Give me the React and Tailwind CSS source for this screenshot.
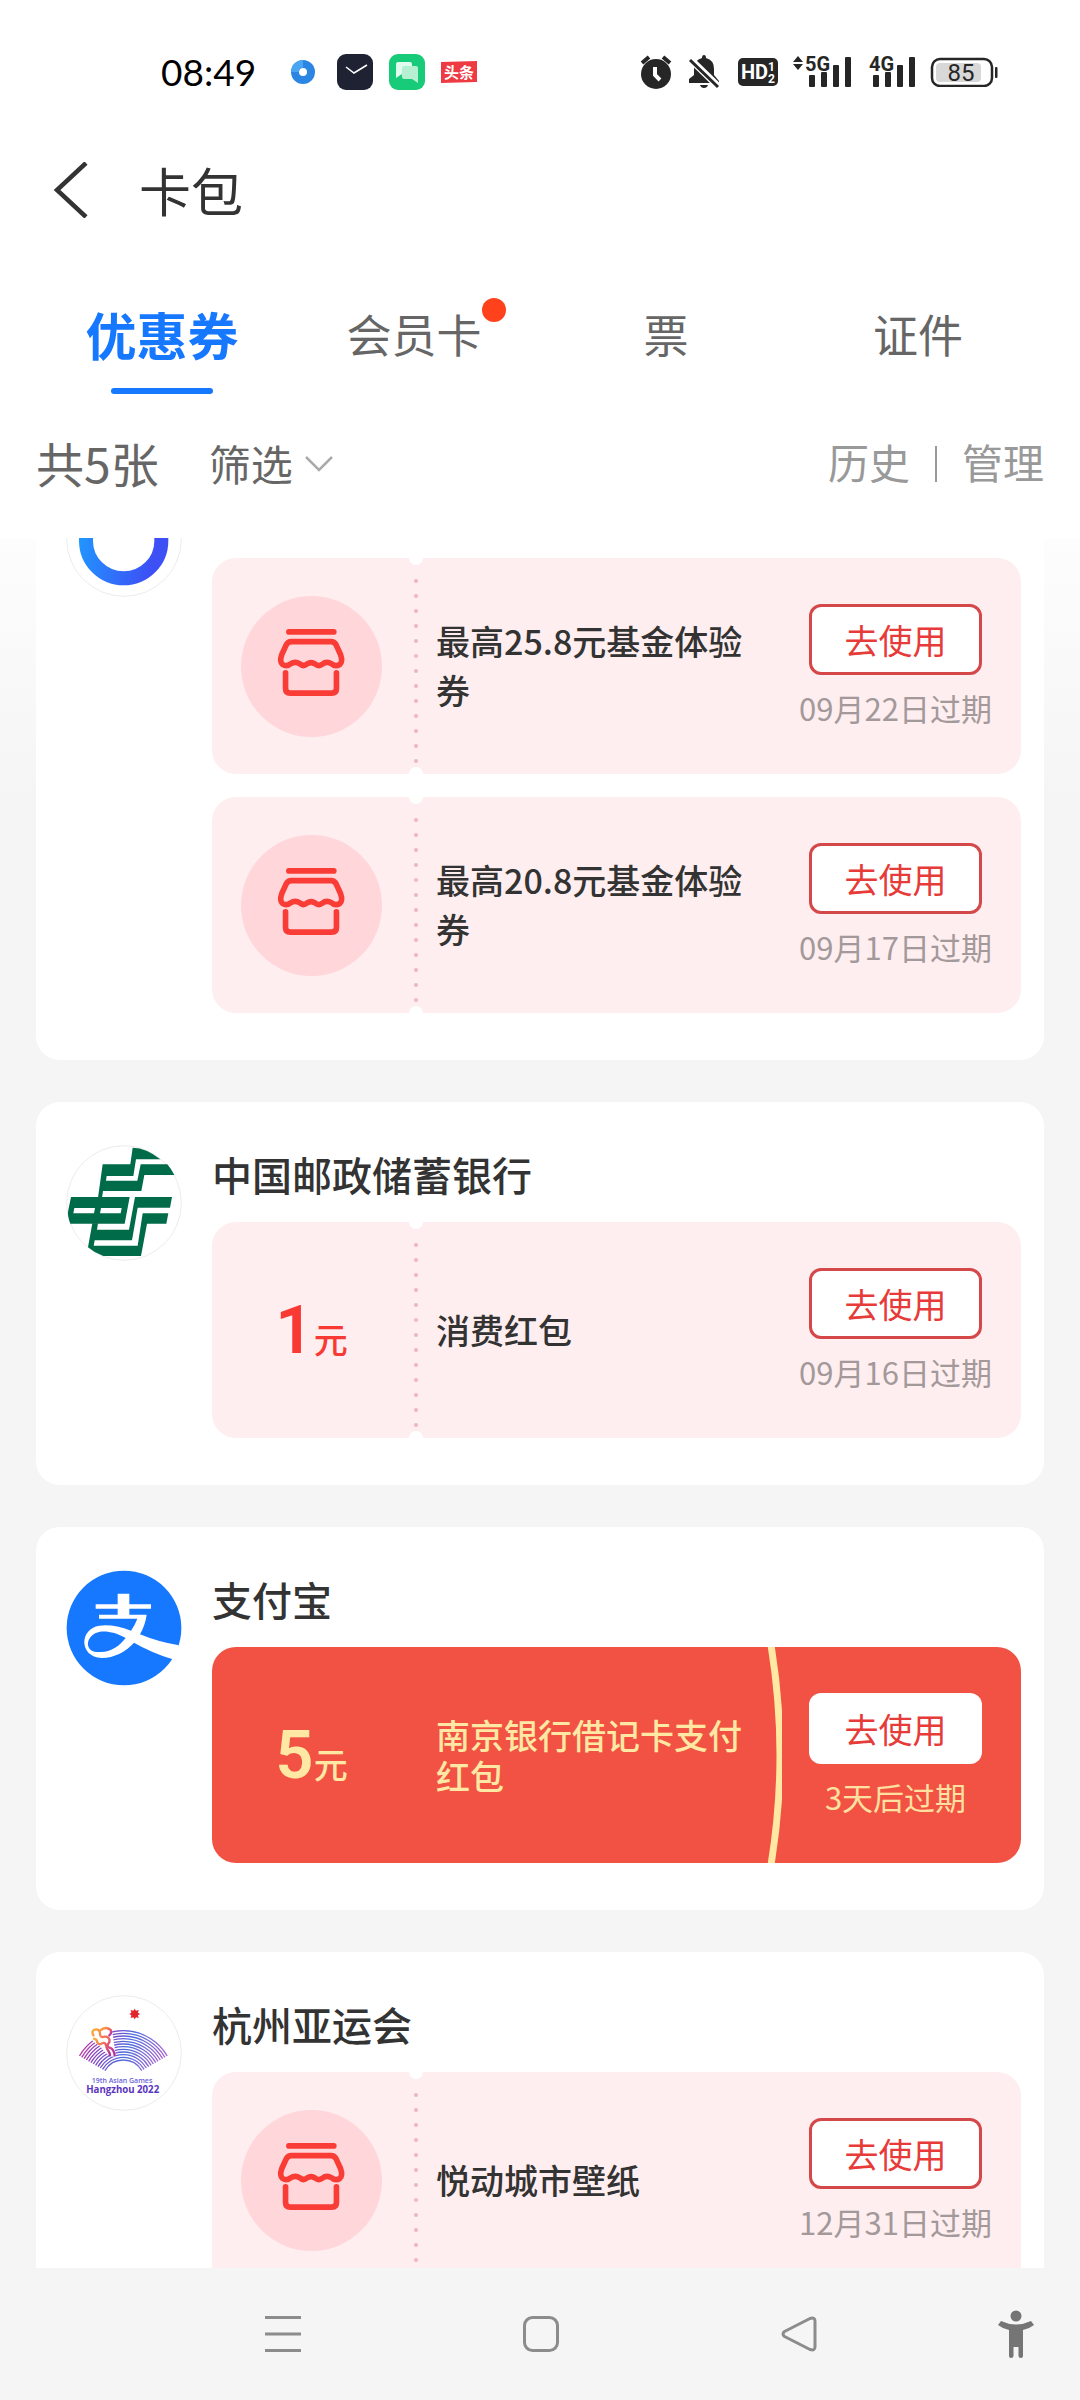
import React, { useState } from "react";

const tabs = [
  { id: "coupon", label: "优惠券" },
  { id: "member", label: "会员卡", dot: true },
  { id: "ticket", label: "票" },
  { id: "license", label: "证件" },
];

const merchants = [
  {
    logo: "ring",
    coupons: [
      { title: "最高25.8元基金体验券", expire: "09月22日过期" },
      { title: "最高20.8元基金体验券", expire: "09月17日过期" },
    ],
  },
  {
    name: "中国邮政储蓄银行",
    logo: "post",
    coupons: [{ title: "消费红包", amount: 1, expire: "09月16日过期" }],
  },
  {
    name: "支付宝",
    logo: "alipay",
    coupons: [
      {
        title: "南京银行借记卡支付红包",
        amount: 5,
        expire: "3天后过期",
        red: true,
      },
    ],
  },
  {
    name: "杭州亚运会",
    logo: "games",
    coupons: [{ title: "悦动城市壁纸", expire: "12月31日过期" }],
  },
];

const RingLogo = () => (
  <svg viewBox="108 -117 348 348" className="w-full">
    <defs>
      <linearGradient id="ring" x1="0" y1="0" x2="1" y2="0.2">
        <stop offset="0" stopColor="#2196ff" />
        <stop offset="1" stopColor="#3d50f5" />
      </linearGradient>
    </defs>
    <circle cx="282" cy="57" r="172" fill="#fff" stroke="#ececec" strokeWidth="3" />
    <circle cx="281" cy="62" r="113" fill="none" stroke="url(#ring)" strokeWidth="42" />
  </svg>
);

const PostLogo = () => (
  <svg viewBox="108 165 348 348" className="w-full">
    <circle cx="282" cy="339" r="172" fill="#fff" stroke="#ececec" strokeWidth="3" />
    <g fill="#006b48">
      <path d="M218 223H301L308 173Q350 174 391 208H318L310 258H230L228 272H322L332 223H412Q424 237 433 255H343L334 303H219L216 323H204Z" />
      <path
        fillRule="evenodd"
        d="M123 321H299L284 401H121Q111 375 115 360ZM133 354L130 370H192L195 354ZM213 354L210 370H272L275 354Z"
      />
      <path d="M187 400H204L201 419H297L315 321H426L420 353H323L306 451H194L191 467H323L338 370H415L409 401H351L333 498H220Q194 489 174 472Z" />
    </g>
  </svg>
);

const AlipayLogo = () => (
  <svg viewBox="108 90 348 348" className="w-full">
    <circle cx="282" cy="264" r="172" fill="#1677ff" />
    <path
      d="M197 193H263V161H298V193H363V206H298V224H350Q346 254 330 283Q385 306 447 316Q443 340 428 358Q360 336 312 308Q272 352 215 354C146 350 148 266 208 257Q250 252 303 272Q315 255 322 236H207V224H263V206H197Z"
      fill="#fff"
    />
    <path
      d="M287 294C255 275 220 270 200 278C166 290 162 338 208 336C245 338 270 315 287 294Z"
      fill="#1677ff"
    />
  </svg>
);

const GamesLogo = () => {
  const radii = [64, 72, 80, 88, 96, 104, 112, 120, 128, 136, 144, 152];
  return (
    <svg viewBox="108 43 348 348" className="w-full">
      <defs>
        <linearGradient id="fan" gradientUnits="userSpaceOnUse" x1="150" y1="150" x2="400" y2="270">
          <stop offset="0" stopColor="#e8338a" />
          <stop offset="0.25" stopColor="#8a3fc4" />
          <stop offset="0.55" stopColor="#4f6edc" />
          <stop offset="1" stopColor="#b45fd0" />
        </linearGradient>
        <linearGradient id="wave" x1="0" y1="0" x2="1" y2="1">
          <stop offset="0" stopColor="#fbb03b" />
          <stop offset="0.5" stopColor="#f2665e" />
          <stop offset="1" stopColor="#b02aa8" />
        </linearGradient>
      </defs>
      <circle cx="282" cy="217" r="172" fill="#fff" stroke="#ececec" strokeWidth="3" />
      <path d="M314 84l4 6 8-2-2 8 6 4-6 4 2 8-8-2-4 6-4-6-8 2 2-8-6-4 6-4-2-8 8 2z" fill="#e0262c" />
      <g fill="none" stroke="url(#fan)" strokeWidth="4">
        {radii.map((r) => (
          <path
            key={r}
            d={`M${280 - r * 0.866} ${302 - r * 0.5}A${r} ${r} 0 0 1 ${280 + r * 0.866} ${302 - r * 0.5}`}
          />
        ))}
      </g>
      <path d="M184 150Q214 128 246 148L258 228Q232 230 212 198L188 182Z" fill="#fff" />
      <g fill="none" stroke="url(#wave)" strokeWidth="7" strokeLinecap="round">
        <path d="M190 164q-8-16 8-18q12 0 12 14q0 12 14 8q10-2 14 8q2 10-4 14q-4 10 8 12q10 6 12 22" />
        <path d="M212 148q16-12 30 0q4 10-4 16" />
        <path d="M192 174q10 2 10 12q6 8 14 2q10-4 12 6q2 12 8 18q4 6 4 12" />
      </g>
      <text x="276" y="308" textAnchor="middle" fontSize="21" fill="#6a62d8" className="font-['Open_Sans',sans-serif] font-semibold">
        19th Asian Games
      </text>
      <text x="278" y="338" textAnchor="middle" fontSize="29" fill="#5a35c0" className="font-['Open_Sans',sans-serif] font-bold">
        Hangzhou 2022
      </text>
    </svg>
  );
};

const logos = {
  ring: RingLogo,
  post: PostLogo,
  alipay: AlipayLogo,
  games: GamesLogo,
};

const StoreIcon = () => (
  <svg viewBox="633 227 424 424" className="w-[141px] h-[141px]">
    <circle cx="845" cy="439" r="212" fill="#ffd6da" />
    <g fill="none" stroke="#fa3c36" strokeWidth="17" strokeLinecap="round" strokeLinejoin="round">
      <path d="M777 335H912" />
      <path d="M784 364H904Q914 364 919 374L932 402Q940 424 930 433Q917 441 906 431Q890 422 878 432Q867 441 855 431Q844 423 832 431Q820 441 810 431Q796 422 782 431Q770 441 758 433Q748 424 756 402L769 374Q774 364 784 364Z" />
      <path d="M767 458V505Q767 519 781 519H906Q920 519 920 505V458" />
    </g>
  </svg>
);

const Signal = ({ label, arrows }) => (
  <svg viewBox="0 -8 60 52" className="w-[60px] h-[52px]" fill="#262626">
    {arrows && <path d="M6 2L11 8H1ZM6 16L11 10H1Z" />}
    <text x="13" y="17" fontSize="20" className="font-['Roboto',sans-serif] font-bold">
      {label}
    </text>
    <rect x="17" y="21" width="6" height="12" rx="1" />
    <rect x="29" y="18" width="6" height="15" rx="1" />
    <rect x="41" y="11" width="6" height="22" rx="1" />
    <rect x="53" y="3" width="6" height="30" rx="1" />
  </svg>
);

const StatusBar = () => (
  <div className="h-36 pl-[161px] pr-[82px] flex items-center justify-between">
    <div className="flex items-center">
      <span className="w-[124px] text-[37px] leading-[44px] text-black font-['Lato',sans-serif]">08:49</span>
      <div className="flex items-center gap-4">
        <svg viewBox="0 0 36 36" className="w-9 h-9">
          <circle cx="18" cy="18" r="8" fill="none" stroke="#2a86e2" strokeWidth="8" />
          <path d="M10 18a8 8 0 0 1 8-8" fill="none" stroke="#4aa5f2" strokeWidth="8" />
        </svg>
        <svg viewBox="0 0 36 36" className="w-9 h-9">
          <rect width="36" height="36" rx="9" fill="#1f2233" />
          <path d="M9 13L17 19L30 11" fill="none" stroke="#fff" strokeWidth="1.5" />
        </svg>
        <svg viewBox="0 0 36 36" className="w-9 h-9">
          <rect width="36" height="36" rx="9" fill="#17cb78" />
          <path d="M9 8H21Q23 8 23 10V18Q23 20 21 20H13L7 24V10Q7 8 9 8Z" fill="#e2fbef" />
          <path d="M15 12H27Q29 12 29 14V29L23 25H15Q13 25 13 23V14Q13 12 15 12Z" fill="#b5f0d3" />
        </svg>
        <svg viewBox="0 0 36 36" className="w-9 h-9">
          <path d="M0 8L36 7V28L0 29Z" fill="#ee3b43" />
          <text x="18" y="24" textAnchor="middle" fontSize="15" fill="#fff" className="font-bold">
            头条
          </text>
        </svg>
      </div>
    </div>
    <div className="flex items-center">
      <svg viewBox="0 0 32 36" className="w-8 h-9" fill="#262626">
        <circle cx="16" cy="20" r="15" />
        <path d="M2 9L9 3M30 9L23 3" stroke="#262626" strokeWidth="4" />
        <path d="M15 13V21L20 26" fill="none" stroke="#fff" strokeWidth="4" />
      </svg>
      <svg viewBox="0 0 32 36" className="ml-4 w-8 h-9">
        <path d="M16 1Q18 1 18 4Q26 6 26 15V21L31 27V29H1V25L6 21V15Q6 6 14 4Q14 1 16 1ZM12 31H20Q19 34 16 34Q13 34 12 31Z" fill="#262626" />
        <path d="M0 3L32 34" stroke="#fff" strokeWidth="7" />
        <path d="M2 6L30 33" stroke="#262626" strokeWidth="3" />
      </svg>
      <svg viewBox="0 0 40 28" className="ml-[18px] w-10 h-7">
        <rect width="40" height="28" rx="5" fill="#262626" />
        <g fill="#fff" className="font-['Roboto',sans-serif] font-bold">
          <text x="3" y="21" fontSize="20">HD</text>
          <text x="30" y="13" fontSize="12">1</text>
          <text x="30" y="25" fontSize="12">2</text>
        </g>
      </svg>
      <span className="ml-3.5 flex gap-1">
        <Signal label="5G" arrows />
        <Signal label="4G" />
      </span>
      <svg viewBox="0 0 68 30" className="ml-3.5 w-[68px] h-[30px]">
        <rect x="2" y="2" width="60" height="27" rx="8" fill="#fff" stroke="#262626" strokeWidth="2.5" />
        <rect x="6" y="6" width="45" height="19" rx="4" fill="#d8d8d8" />
        <rect x="65" y="10" width="2.5" height="11" rx="1" fill="#262626" />
        <text x="31" y="24" textAnchor="middle" fontSize="24" fill="#262626" className="font-['Roboto',sans-serif]">
          85
        </text>
      </svg>
    </div>
  </div>
);

const Coupon = ({ title, amount, expire, red }) => (
  <div
    className={`relative flex items-center h-[216px] rounded-3xl overflow-hidden ${red ? "bg-[#f15244]" : "bg-[#feeeef]"}`}
  >
    <div
      className={`w-[199px] shrink-0 flex items-baseline justify-center ${red ? "text-[#ffe8a3]" : "text-[#f93a34]"}`}
    >
      {amount ? (
        <>
          <span className="text-[67px] leading-[80px] font-semibold font-['Roboto',sans-serif]">{amount}</span>
          <span className="text-[34px] font-medium">元</span>
        </>
      ) : (
        <StoreIcon />
      )}
    </div>
    <p
      className={`flex-1 pl-[25px] text-[34px] ${red ? "leading-[41px] font-medium text-[#ffe8a3]" : "pb-0.5 leading-[49px] font-medium text-[#333]"}`}
    >
      {title}
    </p>
    <div className="w-[251px] shrink-0 flex flex-col items-center gap-3">
      <button
        type="button"
        className={`w-[173px] h-[71px] rounded-xl bg-white text-[34px] text-[#e63b38] ${red ? "" : "border-3 border-[#d4484a]"}`}
      >
        去使用
      </button>
      <span className={`text-[31px] leading-[42px] ${red ? "text-[#ffe0a0]" : "text-[#a3999a]"}`}>{expire}</span>
    </div>

    {red ? (
      <svg viewBox="0 0 20 216" className="absolute right-[239px] top-0 w-5 h-full">
        <path d="M9 -2Q27 108 9 218" fill="none" stroke="#ffe8a3" strokeWidth="7" />
      </svg>
    ) : (
      <svg viewBox="0 0 16 216" className="absolute left-[196px] top-0 w-4 h-full">
        <path d="M8 23V204" stroke="#efb6bd" strokeWidth="4" strokeLinecap="round" strokeDasharray="0 15" />
        <circle cx="8" cy="0" r="7" fill="#fff" />
        <circle cx="8" cy="216" r="7" fill="#fff" />
      </svg>
    )}
  </div>
);

const MerchantCard = ({ name, logo, coupons }) => {
  const Logo = logos[logo];
  return (
    <section className="flex items-start gap-[30px] pl-[30px] pr-[23px] pt-[43px] pb-[47px] bg-white rounded-3xl">
      <div className="w-[116px] shrink-0">
        <Logo />
      </div>
      <div className="flex-1">
        <h2 className="min-h-[58px] mb-[19px] text-[40px] leading-[58px] font-medium text-[#333]">{name}</h2>
        <div className="flex flex-col gap-[23px]">
          {coupons.map((coupon) => (
            <Coupon key={coupon.title} {...coupon} />
          ))}
        </div>
      </div>
    </section>
  );
};

const NavBar = () => (
  <nav className="h-[132px] shrink-0 pl-[154px] flex items-center bg-[#f5f5f5]">
    <button type="button" aria-label="菜单" className="flex-1 flex justify-center">
      <svg viewBox="0 0 36 36" className="w-9 h-9" stroke="#8c8c8c" strokeWidth="3">
        <path d="M0 1.5H36M0 18H36M0 34.5H36" />
      </svg>
    </button>
    <button type="button" aria-label="主页" className="flex-1 flex justify-center">
      <svg viewBox="0 0 36 36" className="w-9 h-9" fill="none" stroke="#8c8c8c" strokeWidth="3">
        <rect x="1.5" y="1.5" width="33" height="33" rx="8" />
      </svg>
    </button>
    <button type="button" aria-label="返回桌面" className="flex-1 flex justify-center">
      <svg viewBox="0 0 36 36" className="w-9 h-9" fill="none" stroke="#8c8c8c" strokeWidth="3">
        <path d="M29 2.5L3.5 15.5Q0.5 18 3.5 20.5L29 33.5Q34 35 34 31V5Q34 1 29 2.5Z" strokeLinejoin="round" />
      </svg>
    </button>
    <button type="button" aria-label="无障碍" className="w-[152px] pr-[46px] flex justify-end">
      <svg viewBox="0 0 36 48" className="w-9 h-12" fill="#757575">
        <circle cx="18" cy="6" r="5.5" />
        <path d="M3 11Q18 18 33 11L36 15Q31 19 25 20V46Q25 48 23 48Q20.5 48 20.5 46V37H15.5V46Q15.5 48 13 48Q11 48 11 46V20Q5 19 0 15Z" />
      </svg>
    </button>
  </nav>
);

const App = () => {
  const [activeTab, setActiveTab] = useState("coupon");

  return (
    <div className="h-screen flex flex-col overflow-hidden bg-[#f5f5f5] font-['Noto_Sans_CJK_SC',sans-serif]">
      <header className="shrink-0 bg-white">
        <StatusBar />

        <div className="h-[92px] pl-[53px] flex items-center gap-[50px]">
          <button type="button" aria-label="返回">
            <svg viewBox="0 0 36 56" className="w-9 h-14" fill="none" stroke="#333" strokeWidth="4.5">
              <path d="M33 1L4 28L33 55" />
            </svg>
          </button>
          <h1 className="text-[52px] leading-[60px] text-[#333]">卡包</h1>
        </div>

        <div role="tablist" className="pt-[68px] px-9 grid grid-cols-4">
          {tabs.map((tab) => {
            const active = tab.id === activeTab;
            return (
              <button
                key={tab.id}
                type="button"
                role="tab"
                aria-selected={active}
                onClick={() => setActiveTab(tab.id)}
                className="flex flex-col items-center gap-6"
              >
                <span
                  className={`relative leading-[60px] ${active ? "text-[51px] font-bold text-[#1677ff]" : "text-[45px] text-[#666]"}`}
                >
                  {tab.label}
                  {tab.dot && (
                    <span className="absolute left-full -top-1.5 w-6 h-6 rounded-full bg-[#ff411c]" />
                  )}
                </span>
                <span className={`w-[102px] h-1.5 rounded-full ${active ? "bg-[#1677ff]" : ""}`} />
              </button>
            );
          })}
        </div>

        <div className="h-36 px-9 pb-1 flex items-center justify-between">
          <div className="flex items-center">
            <span className="pb-1 text-[48px] text-[#666]">共5张</span>
            <button type="button" className="ml-[50px] flex items-center gap-3 text-[42px] text-[#666]">
              <span className="pb-1">筛选</span>
              <svg viewBox="0 0 28 16" className="w-7 h-4" fill="none" stroke="#aaa" strokeWidth="2.5">
                <path d="M1 1L14 14L27 1" />
              </svg>
            </button>
          </div>
          <div className="flex items-center gap-[25px] text-[41px] text-[#999]">
            <button type="button" className="pb-1">
              历史
            </button>
            <span className="w-0.5 h-9 bg-[#999]" />
            <button type="button" className="pb-1">
              管理
            </button>
          </div>
        </div>
      </header>

      <main className="flex-1 min-h-0 overflow-hidden bg-linear-to-b from-[#fdfdfd] to-[#f5f5f5] to-15%">
        {/* list is scrolled part way into the first card */}
        <div className="-mt-[100px] px-9 flex flex-col gap-[42px]">
          {merchants.map((merchant) => (
            <MerchantCard key={merchant.logo} {...merchant} />
          ))}
        </div>
      </main>

      <NavBar />
    </div>
  );
};

export default App;
